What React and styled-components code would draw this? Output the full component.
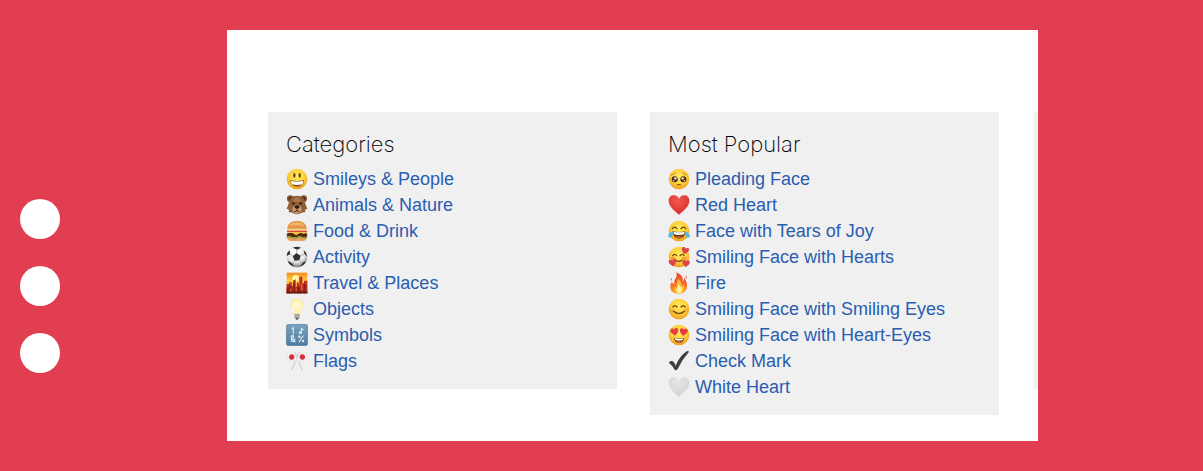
import React from "react";
import styled, { createGlobalStyle } from "styled-components";

const FaceBase = ({ id }) => (
  <>
    <defs>
      <radialGradient id={id} cx="50%" cy="38%" r="62%">
        <stop offset="0" stopColor="#ffec62" />
        <stop offset="0.6" stopColor="#fdcf3c" />
        <stop offset="1" stopColor="#ee9c1d" />
      </radialGradient>
    </defs>
    <circle cx="33" cy="33" r="31" fill={`url(#${id})`} />
  </>
);

const HEART =
  "M33 62C20 50 2 38 2 20C2 10 9 4 17 4C25 4 31 9 33 15C35 9 41 4 49 4C57 4 64 10 64 20C64 38 46 50 33 62Z";

const Grinning = () => (
  <>
    <FaceBase id="grinning" />
    <ellipse cx="25" cy="22" rx="3.5" ry="8" fill="#6b4612" />
    <ellipse cx="41" cy="22" rx="3.5" ry="8" fill="#6b4612" />
    <path d="M12 36Q33 42 54 36Q52 56 33 56Q14 56 12 36Z" fill="#85521a" />
    <path d="M14 38Q33 43 52 38L49 49Q33 53 17 49Z" fill="#fff" />
  </>
);

const Bear = () => (
  <>
    <circle cx="13" cy="14" r="10" fill="#80502c" />
    <circle cx="53" cy="14" r="10" fill="#80502c" />
    <circle cx="13" cy="14" r="5" fill="#4e2d18" />
    <circle cx="53" cy="14" r="5" fill="#4e2d18" />
    <path
      d="M33 5C48 5 57 14 58 29L64 44L57 47L58 54L47 56Q33 66 19 56L8 54L9 47L2 44L8 29C9 14 18 5 33 5Z"
      fill="#905d35"
    />
    <path d="M33 9Q43 10 45 24H21Q23 10 33 9Z" fill="#a8744a" />
    <circle cx="22" cy="28" r="3.5" fill="#25160e" />
    <circle cx="44" cy="28" r="3.5" fill="#25160e" />
    <ellipse cx="33" cy="46" rx="14" ry="13" fill="#c89a72" />
    <path d="M25 37Q33 31 41 37Q41 44 33 45Q25 44 25 37Z" fill="#2b1a13" />
    <path d="M33 44V51M25 53Q33 48 41 53" fill="none" stroke="#4c2a1a" strokeWidth="3" />
  </>
);

const Burger = () => (
  <>
    <path d="M3 50H63Q63 62 50 63H16Q3 62 3 50Z" fill="#e6a05a" />
    <path d="M4 28C4 10 17 3 33 3C49 3 62 10 62 28Q33 34 4 28Z" fill="#e29445" />
    <path d="M10 20Q17 7 33 7Q49 7 56 20Q33 12 10 20Z" fill="#f3b66c" />
    <rect x="3" y="26" width="60" height="6" rx="3" fill="#f1d194" />
    <path d="M3 32H63V37H3Z" fill="#d94a2e" />
    <rect x="2" y="39" width="62" height="12" rx="6" fill="#512815" />
    <path d="M4 37H62L54 42L43 38L31 46L19 39Z" fill="#fbc52f" />
    <path d="M2 49Q9 45 17 50Q25 55 33 50Q41 45 49 50Q57 54 64 49V53Q56 58 49 54Q41 50 33 54Q25 58 17 54Q9 50 2 53Z" fill="#6f9f32" />
  </>
);

const Soccer = () => (
  <>
    <defs>
      <radialGradient id="ball" cx="45%" cy="30%" r="70%">
        <stop offset="0" stopColor="#fff" />
        <stop offset="0.65" stopColor="#e6e6e6" />
        <stop offset="1" stopColor="#777" />
      </radialGradient>
    </defs>
    <circle cx="33" cy="33" r="31" fill="url(#ball)" />
    <g fill="#303030">
      <path d="M31 21L44 29L40 43L26 44L20 31Z" />
      <path d="M20 5Q33 -1 45 5L34 11Z" />
      <path d="M2 30Q3 19 10 13L13 24Z" />
      <path d="M53 12Q62 20 63 31L55 24Z" />
      <path d="M9 46L20 54L23 62Q12 58 6 49Z" />
      <path d="M60 46L50 50L44 61Q56 57 60 46Z" />
    </g>
    <path
      d="M31 21L34 10M44 29L55 24M40 43L50 51M26 44L19 54M20 31L12 23"
      fill="none"
      stroke="#777"
      strokeWidth="1.5"
    />
  </>
);

const Cityscape = () => (
  <>
    <defs>
      <linearGradient id="dusk" x1="0" y1="0" x2="0" y2="1">
        <stop offset="0" stopColor="#f28b1d" />
        <stop offset="0.4" stopColor="#ffcf45" />
        <stop offset="1" stopColor="#dc4a20" />
      </linearGradient>
    </defs>
    <rect x="2" y="2" width="62" height="62" fill="url(#dusk)" />
    <circle cx="29" cy="19" r="10" fill="#fff3a0" />
    <path d="M2 36H10V31H17V42H21V26L29 22V45H33V32H39V17L46 13L49 17V34H54V26H64V64H2Z" fill="#bf3023" />
    <path d="M2 46H9V40H16V64H2ZM22 33H27V64H22ZM33 44H43V64H33ZM53 36H59V64H53Z" fill="#8b201e" />
    <path d="M40 21H42V42H40ZM46 36H49V55H46ZM12 50H15V60H12ZM30 50H32V60H30Z" fill="#f36a31" />
    <rect x="2" y="58" width="62" height="6" fill="#64211b" />
  </>
);

const Bulb = () => (
  <>
    <defs>
      <radialGradient id="bulb" cx="50%" cy="50%" r="60%">
        <stop offset="0" stopColor="#fffef0" />
        <stop offset="0.65" stopColor="#fff4b8" />
        <stop offset="1" stopColor="#eedc86" />
      </radialGradient>
    </defs>
    <path d="M33 2C45 2 52 10 52 21C52 32 43 38 42 50H24C23 38 14 32 14 21C14 10 21 2 33 2Z" fill="url(#bulb)" />
    <path d="M30 48L28 28L33 31L38 28L36 48" fill="none" stroke="#f2d98c" strokeWidth="1.5" />
    <path d="M25 48H41V58L37 63H29L25 58Z" fill="#999a96" />
    <path d="M25 51H41M25 55H41" stroke="#d2d2cf" strokeWidth="1.5" />
    <path d="M29 61H37L35 65H31Z" fill="#45484a" />
  </>
);

const InputSymbols = () => (
  <>
    <defs>
      <linearGradient id="key" x1="0" y1="0" x2="0" y2="1">
        <stop offset="0" stopColor="#7ba2bf" />
        <stop offset="1" stopColor="#4b7ba3" />
      </linearGradient>
    </defs>
    <rect x="1" y="1" width="64" height="64" rx="7" fill="url(#key)" stroke="#527a99" strokeWidth="2" />
    <g fill="none" stroke="#dce8f1" strokeWidth="3.5" strokeLinecap="round">
      <path d="M18 15L22 12V29" />
      <path d="M46 13V26M46 14L52 17" />
      <ellipse cx="43" cy="26" rx="3" ry="2" />
      <path d="M27 54L16 41Q14 35 20 35Q26 36 21 42Q13 47 17 52Q23 55 27 45" />
      <path d="M51 36L39 54" />
      <circle cx="40" cy="38" r="2" />
      <circle cx="51" cy="51" r="2" />
    </g>
  </>
);

const Flags = () => (
  <>
    <path d="M26 5L49 61M40 5L17 61" stroke="#c4bfb9" strokeWidth="2.5" />
    <path d="M27 10Q19 15 12 9Q7 6 2 10L8 35Q15 29 22 33Q29 35 33 29Z" fill="#f6f5f5" stroke="#d8d4d4" />
    <path d="M39 10Q47 15 54 9Q59 6 64 10L58 35Q51 29 44 33Q37 35 33 29Z" fill="#f6f5f5" stroke="#d8d4d4" />
    <ellipse cx="17" cy="21" rx="8" ry="8" fill="#d6303b" />
    <ellipse cx="49" cy="21" rx="8" ry="8" fill="#d6303b" />
  </>
);

const Pleading = () => (
  <>
    <FaceBase id="pleading" />
    <circle cx="20" cy="34" r="9" fill="#4c2a10" />
    <circle cx="46" cy="34" r="9" fill="#4c2a10" />
    <g fill="#fff">
      <circle cx="22" cy="31" r="3.5" />
      <circle cx="44" cy="31" r="3.5" />
      <circle cx="17" cy="38" r="2" />
      <circle cx="49" cy="38" r="2" />
    </g>
    <path d="M10 21Q18 20 23 14M56 21Q48 20 43 14" fill="none" stroke="#b87a20" strokeWidth="2.5" strokeLinecap="round" />
    <path d="M27 51Q33 47 39 51" fill="none" stroke="#7d4810" strokeWidth="3" strokeLinecap="round" />
  </>
);

const Heart = ({ id, light, dark }) => (
  <>
    <defs>
      <radialGradient id={id} cx="45%" cy="28%" r="75%">
        <stop offset="0" stopColor={light} />
        <stop offset="1" stopColor={dark} />
      </radialGradient>
    </defs>
    <path d={HEART} fill={`url(#${id})`} />
  </>
);

const RedHeart = () => <Heart id="redHeart" light="#f4564c" dark="#d62d2c" />;

const WhiteHeart = () => <Heart id="whiteHeart" light="#e6e6e6" dark="#d2d2d2" />;

const TearsOfJoy = () => (
  <>
    <FaceBase id="joy" />
    <path d="M13 26Q20 17 27 26M39 26Q46 17 53 26" fill="none" stroke="#69400d" strokeWidth="4" strokeLinecap="round" />
    <path d="M13 34Q33 38 53 34Q50 56 33 56Q16 56 13 34Z" fill="#70400f" />
    <path d="M16 35Q33 39 50 35L48 43Q33 47 18 43Z" fill="#fff" />
    <path d="M22 51Q33 46 44 51Q33 58 22 51Z" fill="#e9604a" />
    <path d="M15 34Q15 51 7 53Q-1 53 1 45Q3 38 15 34Z" fill="#51b8e9" />
    <path d="M51 34Q51 51 59 53Q67 53 65 45Q63 38 51 34Z" fill="#51b8e9" />
  </>
);

const SmilingHearts = () => (
  <>
    <FaceBase id="adore" />
    <path d="M14 29Q20 21 26 29M36 29Q42 21 48 29" fill="none" stroke="#70430e" strokeWidth="3.5" strokeLinecap="round" />
    <path d="M22 42Q33 51 42 42" fill="none" stroke="#8b4b10" strokeWidth="4" strokeLinecap="round" />
    <ellipse cx="15" cy="37" rx="7" ry="5" fill="#f28043" opacity="0.7" />
    <ellipse cx="49" cy="37" rx="7" ry="5" fill="#f28043" opacity="0.7" />
    <g fill="#df4548">
      <path d={HEART} transform="translate(43 0) rotate(15) scale(0.36)" />
      <path d={HEART} transform="translate(0 41) rotate(-10) scale(0.37)" />
      <path d={HEART} transform="translate(43 40) rotate(5) scale(0.36)" />
    </g>
  </>
);

const Fire = () => (
  <>
    <defs>
      <linearGradient id="flame" x1="0" y1="0" x2="0" y2="1">
        <stop offset="0" stopColor="#e94831" />
        <stop offset="0.55" stopColor="#f36a2a" />
        <stop offset="1" stopColor="#ffad36" />
      </linearGradient>
    </defs>
    <path
      d="M25 1C42 8 46 19 44 29Q49 26 48 17C61 31 64 64 33 65C4 65 2 43 12 29Q14 36 19 37C15 24 30 18 25 1Z"
      fill="url(#flame)"
    />
    <path d="M31 20Q43 32 40 43Q46 41 47 35Q53 63 33 64Q13 63 20 43Q22 48 27 48Q23 36 31 20Z" fill="#ffbd35" />
    <path d="M33 37Q45 54 40 60Q34 67 27 61Q22 54 33 37Z" fill="#fff1a1" />
    <path d="M10 17Q14 23 10 27Q6 23 10 17ZM54 10Q59 16 55 21Q51 16 54 10Z" fill="#eb6440" />
  </>
);

const SmilingEyes = () => (
  <>
    <FaceBase id="smile" />
    <ellipse cx="12" cy="38" rx="8" ry="6" fill="#f39a42" opacity="0.6" />
    <ellipse cx="54" cy="38" rx="8" ry="6" fill="#f39a42" opacity="0.6" />
    <path d="M15 27Q21 19 27 27M39 27Q45 19 51 27" fill="none" stroke="#70430e" strokeWidth="4" strokeLinecap="round" />
    <path d="M17 40Q33 54 49 40" fill="none" stroke="#70430e" strokeWidth="4" strokeLinecap="round" />
  </>
);

const HeartEyes = () => (
  <>
    <FaceBase id="heartEyes" />
    <g fill="#e53c3e">
      <path d={HEART} transform="translate(5 13) rotate(-8) scale(0.39)" />
      <path d={HEART} transform="translate(36 10) rotate(8) scale(0.39)" />
    </g>
    <path d="M17 41Q33 46 49 41Q46 57 33 57Q20 57 17 41Z" fill="#70400f" />
    <path d="M20 43Q33 47 46 43L44 48Q33 51 22 48Z" fill="#fff" />
    <path d="M25 54Q33 48 41 54Q33 58 25 54Z" fill="#e8604c" />
  </>
);

const CheckMark = () => (
  <path
    d="M3 39Q3 32 12 33Q18 34 23 47Q35 18 56 4Q64 1 62 7Q43 28 29 57Q24 64 19 58Q13 46 3 39Z"
    fill="#3d3e40"
  />
);

const categories = [
  { label: "Smileys & People", icon: Grinning },
  { label: "Animals & Nature", icon: Bear },
  { label: "Food & Drink", icon: Burger },
  { label: "Activity", icon: Soccer },
  { label: "Travel & Places", icon: Cityscape },
  { label: "Objects", icon: Bulb },
  { label: "Symbols", icon: InputSymbols },
  { label: "Flags", icon: Flags },
];

const popular = [
  { label: "Pleading Face", icon: Pleading },
  { label: "Red Heart", icon: RedHeart },
  { label: "Face with Tears of Joy", icon: TearsOfJoy },
  { label: "Smiling Face with Hearts", icon: SmilingHearts },
  { label: "Fire", icon: Fire },
  { label: "Smiling Face with Smiling Eyes", icon: SmilingEyes },
  { label: "Smiling Face with Heart-Eyes", icon: HeartEyes },
  { label: "Check Mark", icon: CheckMark },
  { label: "White Heart", icon: WhiteHeart },
];

const EmojiCard = ({ title, items }) => (
  <Card>
    <Title>{title}</Title>
    <List>
      {items.map(({ label, icon: Icon }) => (
        <li key={label}>
          <EmojiLink href="#">
            <Emoji viewBox="0 0 66 66" aria-hidden="true">
              <Icon />
            </Emoji>
            {label}
          </EmojiLink>
        </li>
      ))}
    </List>
  </Card>
);

const App = () => {
  return (
    <>
      <GlobalStyle />
      <Page>
        <Side>
          <Dot />
          <Dot />
          <Dot />
        </Side>
        <Panel>
          <EmojiCard title="Categories" items={categories} />
          <EmojiCard title="Most Popular" items={popular} />
          <NextCard />
        </Panel>
      </Page>
    </>
  );
};

export default App;

const GlobalStyle = createGlobalStyle`
  * {
    box-sizing: border-box;
  }

  body {
    margin: 0;
    background-color: #e13e52;
    font-family: "Liberation Sans", Arial, sans-serif;
  }
`;

const Page = styled.div`
  display: flex;
  align-items: flex-start;
  min-height: 100vh;
  padding: 30px 165px 30px 20px;
`;

const Side = styled.aside`
  display: flex;
  flex: 0 0 207px;
  flex-direction: column;
  gap: 27px;
  padding-top: 169px;
`;

const Dot = styled.span`
  width: 40px;
  height: 40px;
  border-radius: 50%;
  background-color: #fff;
`;

const Panel = styled.main`
  display: flex;
  flex: 1;
  align-items: flex-start;
  gap: 33px;
  min-width: 0;
  padding: 82px 0 26px 41px;
  overflow: hidden;
  background-color: #fff;
`;

const Card = styled.section`
  flex: 0 0 calc((100% - 72px) / 2);
  padding: 17px 18px 15px;
  background-color: #f0f0f0;
`;

// 오른쪽 끝에 살짝 보이는 다음 카드
const NextCard = styled.div`
  flex: 0 0 calc((100% - 72px) / 2);
  height: 277px;
  margin-left: 2px;
  background-color: #f0f2ee;
`;

const Title = styled.h2`
  margin: 0 0 7px;
  font-family: Inter, "Liberation Sans", sans-serif;
  font-size: 22px;
  font-weight: 200;
  line-height: 30px;
  color: #000;
`;

const List = styled.ul`
  margin: 0;
  padding: 0;
  list-style: none;
`;

const EmojiLink = styled.a`
  display: flex;
  align-items: center;
  gap: 5px;
  height: 26px;
  font-size: 18px;
  white-space: nowrap;
  color: #2a5db0;
  text-decoration: none;
`;

const Emoji = styled.svg`
  flex-shrink: 0;
  width: 22px;
  height: 22px;
`;
